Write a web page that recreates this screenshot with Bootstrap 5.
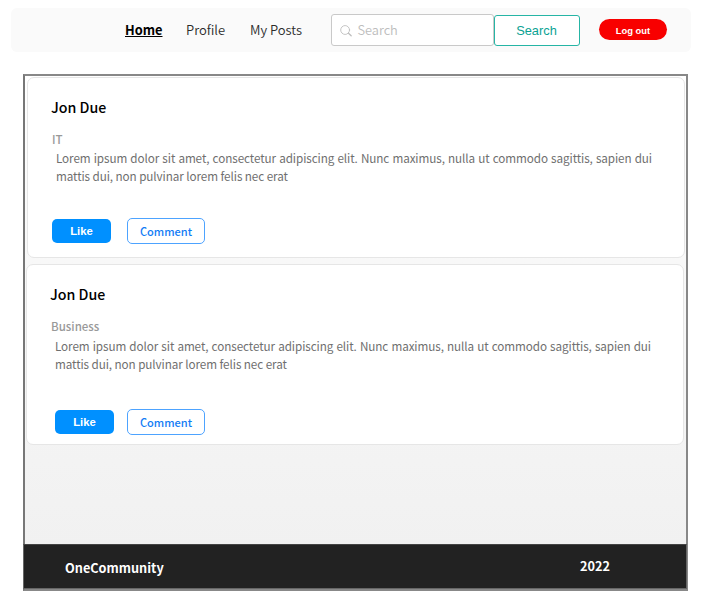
<!DOCTYPE html>
<html lang="en">
<head>
<meta charset="utf-8">
<meta name="viewport" content="width=device-width, initial-scale=1">
<title>OneCommunity</title>
<link href="https://cdn.jsdelivr.net/npm/bootstrap@5.3.0/dist/css/bootstrap.min.css" rel="stylesheet">
<style>
body{font-family:"Noto Sans CJK SC","Noto Sans",sans-serif;background:#fff;height:600px;overflow:hidden}
.topbar{margin:8px 17px 0 11px;height:44px;background:#fafafa;border-radius:6px;padding:0 0 0 114px}
.topbar .nav-link{font-size:13px;line-height:20px;color:#2b2b2b;font-weight:350;padding:0 0 1px;white-space:nowrap}
.topbar .nav-link.active{font-size:12.8px;color:#000;font-weight:700;text-decoration:underline;text-underline-offset:1px;text-decoration-thickness:1px}
.nav-home{width:61px}.nav-profile{width:64px}.nav-posts{width:81px}
.search-box{width:163px;height:32px;border:1px solid #c9c9c9;border-radius:3px;background:#fff;padding:0 0 0 8px}
.search-box input{font-size:12.8px;line-height:20px;height:28px;padding:0 0 1px;border:0;margin-left:5px;background:none;min-height:0}
.search-box input::placeholder{color:#bdbdbd;font-weight:350}
.btn-find{width:86px;height:31px;padding:0 1px 0 0;border:1px solid #26b5a5;border-radius:3px;color:#0aa293;background:#fff;font:12.8px/29px "Liberation Sans",Arial,sans-serif}
.btn-exit{width:68px;height:21px;margin:-1px 0 0 19px;padding:0;border:0;border-radius:11px;background:#f80000;color:#fff;font:700 9.4px/23px "Liberation Sans",Arial,sans-serif}
.board{margin:22px 20px 0 23px;height:517px;border:2px solid #888;border-left-color:#777;background:linear-gradient(#fff,#f8f8f8 36%,#f3f3f3 75%,#f0f0f0)}
.post{border:1px solid #e6e6e6;border-radius:7px;background:#fff}
.post-first{height:181px;margin:1px 0 0 2px;width:658px}
.post-second{height:181px;margin:6px 0 0 1px;width:658px}
.post h2{font-size:14.2px;line-height:20px;font-weight:500;color:#000;margin:19px 0 0 23px}
.topic{font-size:11.5px;line-height:18px;font-weight:500;color:#999;margin:13px 0 0 24px}
.post-text{font-size:11.7px;letter-spacing:-.08px;line-height:18px;color:#6f6f6f;width:596px;margin:1px 0 0 28px;text-align:justify}
.post-second .post-text{margin-top:2px;line-height:17.5px}
.actions{margin:33px 0 0 24px}
.btn-like{width:59px;height:24px;margin-top:1px;padding:0;border:0;border-radius:5px;background:#0090ff;color:#fff;font:700 11.3px/25px "Liberation Sans",Arial,sans-serif}
.btn-note{width:78px;height:26px;margin-left:16px;padding:0;border:1px solid #4da3ff;border-radius:5px;background:#fff;color:#127cf5;font-size:11px;line-height:23px;font-weight:500}
.post-second .actions{margin:37px 0 0 28px}
.post-second .btn-note{margin-left:13px}
.site-foot{height:45px;margin:0 -1px 0 -2px;background:#222;border:1px solid #666;border-top-color:#444;color:#fff;font-size:12.7px;line-height:20px;font-weight:700;padding:0 76px 0 41px}
.foot-name{padding-top:2px}
.foot-year{padding-bottom:1px}
</style>
</head>
<body>
<nav class="topbar d-flex align-items-center">
  <a class="nav-link active nav-home" href="#">Home</a>
  <a class="nav-link nav-profile" href="#">Profile</a>
  <a class="nav-link nav-posts" href="#">My Posts</a>
  <form class="d-flex align-items-center">
    <div class="search-box d-flex align-items-center">
      <svg width="14" height="14" viewBox="0 0 14 14" fill="none" stroke="#bdbdbd" stroke-linecap="round"><circle cx="5.8" cy="7" r="5"/><path d="m9.6 10.7 3 2.8" stroke-width="1.4"/></svg>
      <input class="form-control shadow-none" type="text" placeholder="Search" aria-label="Search">
    </div>
    <button class="btn btn-find" type="button">Search</button>
  </form>
  <button class="btn btn-exit" type="button">Log out</button>
</nav>
<main class="board d-flex flex-column">
  <article class="post post-first">
    <h2>Jon Due</h2>
    <div class="topic">IT</div>
    <p class="post-text">Lorem ipsum dolor sit amet, consectetur adipiscing elit. Nunc maximus, nulla ut commodo sagittis, sapien dui mattis dui, non pulvinar lorem felis nec erat</p>
    <div class="actions d-flex align-items-start"><button class="btn btn-like" type="button">Like</button><button class="btn btn-note" type="button">Comment</button></div>
  </article>
  <article class="post post-second">
    <h2>Jon Due</h2>
    <div class="topic">Business</div>
    <p class="post-text">Lorem ipsum dolor sit amet, consectetur adipiscing elit. Nunc maximus, nulla ut commodo sagittis, sapien dui mattis dui, non pulvinar lorem felis nec erat</p>
    <div class="actions d-flex align-items-start"><button class="btn btn-like" type="button">Like</button><button class="btn btn-note" type="button">Comment</button></div>
  </article>
  <footer class="site-foot mt-auto d-flex justify-content-between align-items-center"><span class="foot-name">OneCommunity</span><span class="foot-year">2022</span></footer>
</main>
<script src="https://cdn.jsdelivr.net/npm/bootstrap@5.3.0/dist/js/bootstrap.bundle.min.js"></script>
</body>
</html>
